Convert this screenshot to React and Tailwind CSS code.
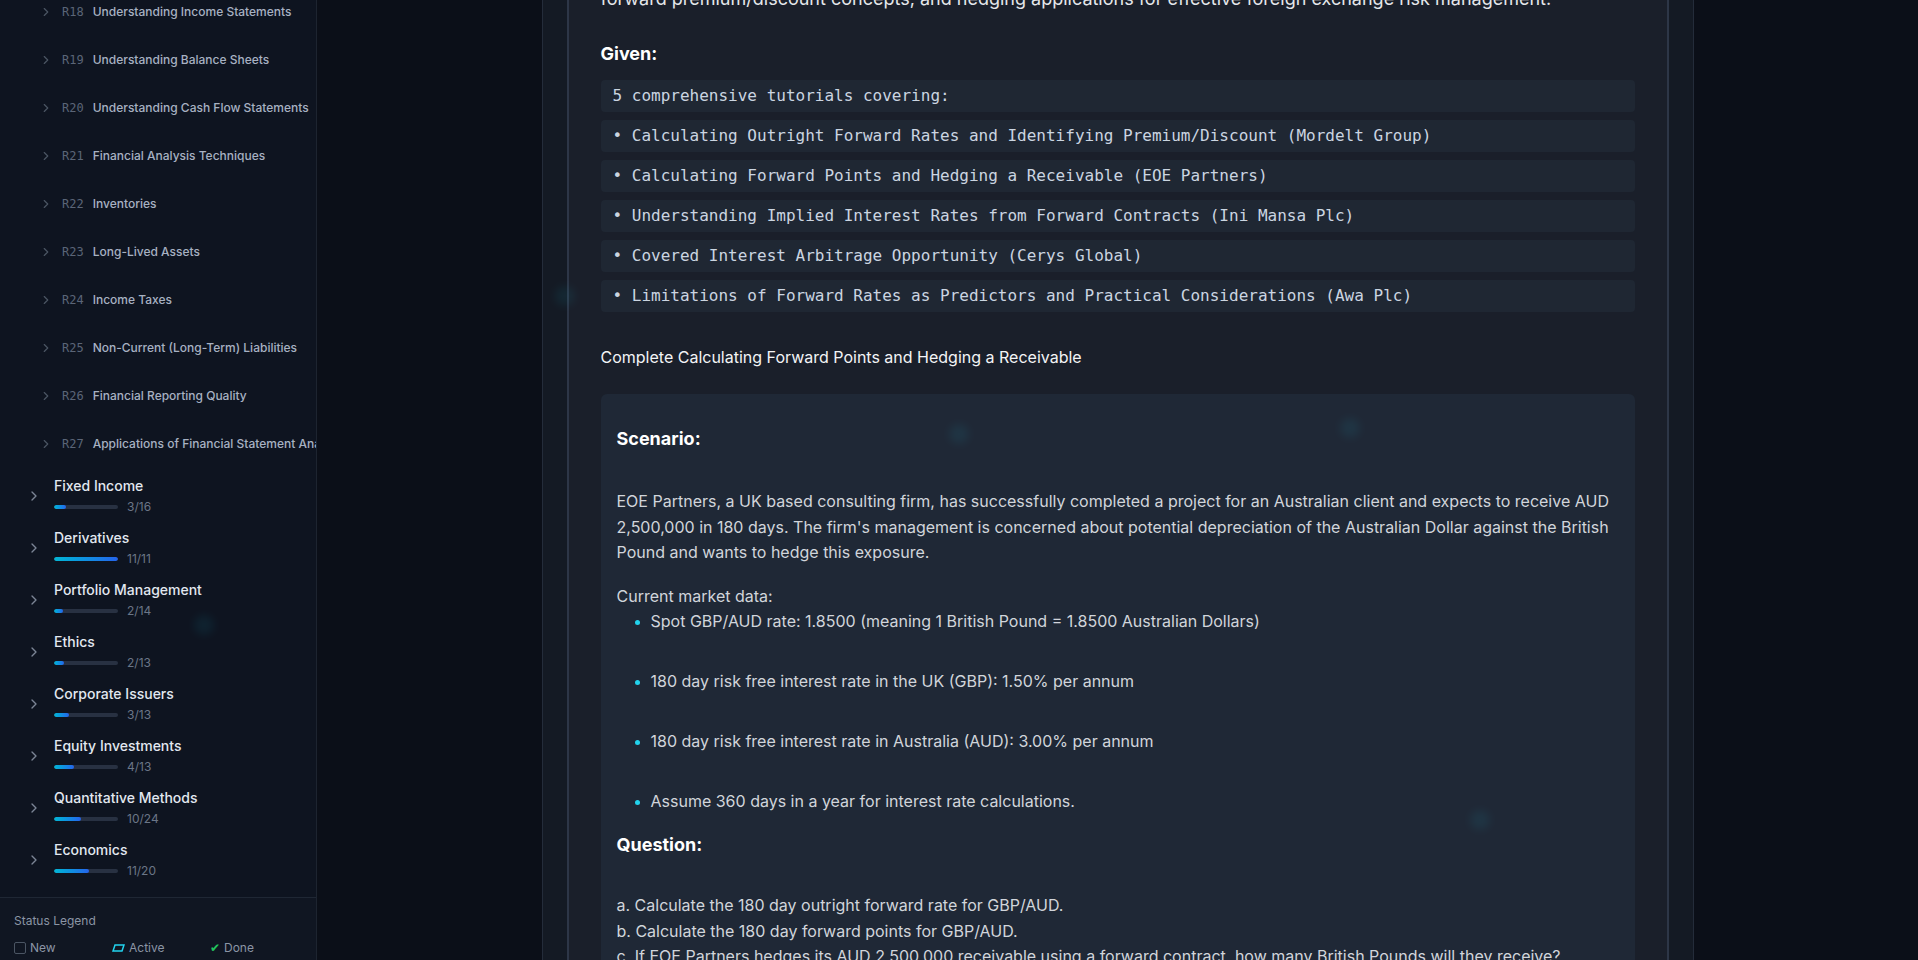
import { ChevronRight } from "lucide-react";

const readings = [
  ["R18", "Understanding Income Statements"],
  ["R19", "Understanding Balance Sheets"],
  ["R20", "Understanding Cash Flow Statements"],
  ["R21", "Financial Analysis Techniques"],
  ["R22", "Inventories"],
  ["R23", "Long-Lived Assets"],
  ["R24", "Income Taxes"],
  ["R25", "Non-Current (Long-Term) Liabilities"],
  ["R26", "Financial Reporting Quality"],
  ["R27", "Applications of Financial Statement Analysis"],
];

const topics = [
  { name: "Fixed Income", done: 3, total: 16 },
  { name: "Derivatives", done: 11, total: 11 },
  { name: "Portfolio Management", done: 2, total: 14 },
  { name: "Ethics", done: 2, total: 13 },
  { name: "Corporate Issuers", done: 3, total: 13 },
  { name: "Equity Investments", done: 4, total: 13 },
  { name: "Quantitative Methods", done: 10, total: 24 },
  { name: "Economics", done: 11, total: 20 },
];

const given = [
  "5 comprehensive tutorials covering:",
  "• Calculating Outright Forward Rates and Identifying Premium/Discount (Mordelt Group)",
  "• Calculating Forward Points and Hedging a Receivable (EOE Partners)",
  "• Understanding Implied Interest Rates from Forward Contracts (Ini Mansa Plc)",
  "• Covered Interest Arbitrage Opportunity (Cerys Global)",
  "• Limitations of Forward Rates as Predictors and Practical Considerations (Awa Plc)",
];

const marketData = [
  "Spot GBP/AUD rate: 1.8500 (meaning 1 British Pound = 1.8500 Australian Dollars)",
  "180 day risk free interest rate in the UK (GBP): 1.50% per annum",
  "180 day risk free interest rate in Australia (AUD): 3.00% per annum",
  "Assume 360 days in a year for interest rate calculations.",
];

function Sidebar() {
  return (
    <aside className="flex h-screen w-[317px] shrink-0 flex-col border-r border-[#1d2430] bg-[#0e1420]">
      <div className="flex-1 overflow-hidden">
        <div className="-mt-3">
          {/* readings of the open topic */}
          {readings.map(([code, title]) => (
            <div
              key={code}
              className="flex h-12 items-center gap-[9px] whitespace-nowrap pl-[39px]"
            >
              <ChevronRight size={14} className="shrink-0 text-[#4b5563]" />
              <span className="shrink-0 font-['DejaVu_Sans_Mono',monospace] text-[12px] text-[#5b6577]">
                {code}
              </span>
              <span className="text-[12px] font-medium text-[#a7b1c2]">{title}</span>
            </div>
          ))}

          {/* topics */}
          {topics.map((t) => (
            <div key={t.name} className="flex h-[52px] items-center gap-3 pl-[26px] pt-[3px]">
              <ChevronRight size={16} className="shrink-0 text-[#7b8595]" />
              <div className="flex flex-col">
                <span className="h-5 text-[14px] font-medium leading-5 text-[#e2e8f0]">
                  {t.name}
                </span>
                <div className="mt-[3px] flex h-4 items-center">
                  <div className="h-1 w-16 overflow-hidden rounded-full bg-[#283142]">
                    <div
                      className="h-full rounded-full bg-linear-to-r from-[#06b6d4] to-[#2563eb]"
                      style={{ width: `${(t.done / t.total) * 100}%` }}
                    />
                  </div>
                  <span className="ml-[9px] text-[12px] leading-4 text-[#6b7687]">
                    {t.done}/{t.total}
                  </span>
                </div>
              </div>
            </div>
          ))}
        </div>
      </div>

      {/* legend */}
      <div className="h-[63px] shrink-0 border-t border-[#1f2734] bg-[#101622] pl-[14px] pt-[15px]">
        <div className="text-[12px] leading-4 text-[#8b95a5]">Status Legend</div>
        <div className="mt-[11px] flex text-[12px] leading-4 text-[#8b95a5]">
          <div className="flex w-[98px] items-center gap-[4px]">
            <span className="h-3 w-3 rounded-[2px] border border-[#4b5563]" />
            <span>New</span>
          </div>
          <div className="flex w-[98px] items-center gap-[4px]">
            <svg width="13" height="8" viewBox="0 0 13 8">
              <polygon points="3,1 12,1 10,7 1,7" fill="none" stroke="#22d3ee" strokeWidth="1.5" />
            </svg>
            <span>Active</span>
          </div>
          <div className="flex items-center gap-[4px]">
            <span className="text-[12px] text-[#22c55e]">✔</span>
            <span>Done</span>
          </div>
        </div>
      </div>
    </aside>
  );
}

function Glow({ className }) {
  return (
    <div
      className={`pointer-events-none absolute h-5 w-5 rounded-full bg-[#22d3ee] opacity-[0.07] blur-[4px] ${className}`}
    />
  );
}

export default function App() {
  return (
    <div className="relative flex h-screen w-full overflow-hidden bg-[#0b0f18] font-['Inter',sans-serif]">
      <Sidebar />

      <main className="h-screen flex-1 overflow-hidden">
        <div className="mx-auto h-full max-w-[1152px] border-x border-[#242c3a] bg-[#141a24] px-6">
          <div className="h-full overflow-hidden border-x-2 border-[#2d3647] bg-[#1a1f2a] px-8">
            <div className="-mt-[15px]">
              <p className="text-lg leading-7 text-[#e5e7eb]">
                forward premium/discount concepts, and hedging applications for effective foreign exchange risk management.
              </p>

              <h3 className="mt-[27px] text-lg font-bold leading-7 text-white">Given:</h3>

              <div className="mt-3 flex flex-col gap-2">
                {given.map((line) => (
                  <div
                    key={line}
                    className="h-8 rounded bg-[#1f2733] px-3 font-['DejaVu_Sans_Mono',monospace] text-base leading-8 text-[#cbd5e1]"
                  >
                    {line}
                  </div>
                ))}
              </div>

              <p className="mt-[33px] text-base leading-6 text-[#f3f4f6]">
                Complete Calculating Forward Points and Hedging a Receivable
              </p>

              {/* scenario */}
              <div className="mt-[25px] rounded-md bg-[#1f2836] px-4 pb-10 pt-[31px]">
                <h3 className="text-lg font-bold leading-7 text-white">Scenario:</h3>
                <p className="mt-9 text-base leading-[25.6px] text-[#d1d5db]">
                  EOE Partners, a UK based consulting firm, has successfully completed a project for an Australian client and expects to receive AUD 2,500,000 in 180 days. The firm's management is concerned about potential depreciation of the Australian Dollar against the British Pound and wants to hedge this exposure.
                </p>
                <p className="mt-[18px] text-base leading-[25.6px] text-[#d1d5db]">
                  Current market data:
                </p>
                <ul className="flex flex-col gap-[34.4px] pl-[18px]">
                  {marketData.map((item) => (
                    <li key={item} className="flex items-center text-base leading-[25.6px] text-[#d1d5db]">
                      <span className="mr-[11px] h-[5px] w-[5px] shrink-0 rounded-full bg-[#22d3ee]" />
                      {item}
                    </li>
                  ))}
                </ul>

                <h3 className="mt-4 text-lg font-bold leading-7 text-white">Question:</h3>
                <div className="mt-[34px] text-base leading-[25.6px] text-[#d1d5db]">
                  <p>a. Calculate the 180 day outright forward rate for GBP/AUD.</p>
                  <p>b. Calculate the 180 day forward points for GBP/AUD.</p>
                  <p>c. If EOE Partners hedges its AUD 2,500,000 receivable using a forward contract, how many British Pounds will they receive?</p>
                </div>
              </div>
            </div>
          </div>
        </div>
      </main>

      {/* faint floating particles */}
      <Glow className="left-[555px] top-[286px]" />
      <Glow className="left-[194px] top-[615px]" />
      <Glow className="left-[949px] top-[424px]" />
      <Glow className="left-[1340px] top-[418px]" />
      <Glow className="left-[1470px] top-[810px]" />
    </div>
  );
}
